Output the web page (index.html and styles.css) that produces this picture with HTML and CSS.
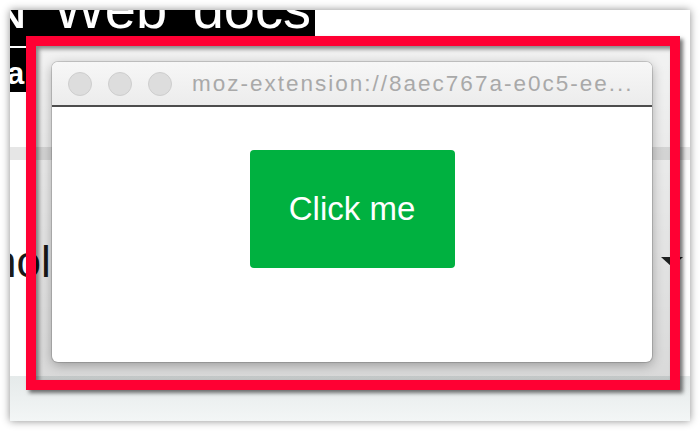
FILE: index.html
```html
<!DOCTYPE html>
<html>
<head>
<meta charset="utf-8">
<link rel="stylesheet" href="styles.css">
</head>
<body>
<div class="shot">
  <div class="hdr"><span class="logo">N Web docs</span></div>
  <div class="nav"><span class="nav-letter">a</span></div>
  <div class="band"></div>
  <div class="row">
    <span class="row-text">nol</span>
    <span class="caret"></span>
  </div>
  <div class="foot"></div>

  <div class="highlight">
    <div class="popup">
      <div class="titlebar">
        <span class="light"></span>
        <span class="light"></span>
        <span class="light"></span>
        <span class="title">moz-extension://8aec767a-e0c5-ee...</span>
      </div>
      <div class="content">
        <button class="btn">Click me</button>
      </div>
    </div>
  </div>
</div>
</body>
</html>
```

FILE: styles.css
```css
html, body {
  margin: 0;
  padding: 0;
  background: #ffffff;
}
body {
  width: 700px;
  height: 432px;
  font-family: "Liberation Sans", Arial, sans-serif;
  padding: 10px;
  box-sizing: border-box;
}
.shot {
  position: relative;
  width: 680px;
  height: 411px;
  background: #ffffff;
  box-shadow: 0 0 8px rgba(0,0,0,0.45);
  overflow: hidden;
  display: flex;
  flex-direction: column;
}
.hdr {
  width: 305px;
  height: 36px;
  flex: none;
  background: #000;
  overflow: hidden;
}
.logo {
  display: block;
  color: #fff;
  font-size: 56px;
  line-height: 56px;
  word-spacing: 10px;
  margin-top: -29px;
  margin-left: -23px;
  white-space: nowrap;
}
.nav {
  width: 16px;
  height: 44px;
  flex: none;
  margin-top: 2px;
  background: #000;
  overflow: hidden;
}
.nav-letter {
  display: block;
  color: #fff;
  font-weight: bold;
  font-size: 31px;
  line-height: 31px;
  margin-top: 10px;
  margin-left: -3px;
}
.band {
  flex: none;
  height: 13px;
  margin-top: 55px;
  background: #e6e6e6;
}
.row {
  flex: none;
  display: flex;
  justify-content: space-between;
  align-items: flex-start;
  margin-top: 80px;
  height: 44px;
}
.row-text {
  font-size: 44px;
  line-height: 44px;
  color: #1a1a1a;
  margin-left: -18px;
}
.caret {
  width: 0;
  height: 0;
  margin-top: 17px;
  margin-right: 7px;
  border-left: 11.5px solid transparent;
  border-right: 11.5px solid transparent;
  border-top: 10px solid #222;
}
.foot {
  flex: none;
  margin-top: auto;
  height: 45px;
  background: linear-gradient(#e5eaea, #f3f6f6);
}
.highlight {
  position: absolute;
  left: 16px;
  top: 26px;
  width: 654px;
  height: 354px;
  box-sizing: border-box;
  border: 10px solid #ff0033;
  padding: 16px 18px 18px 16px;
  background: linear-gradient(rgba(0,0,0,0.05), rgba(0,0,0,0.15));
  box-shadow: 3px 3px 4px rgba(0,0,0,0.55), inset 3px 3px 4px rgba(0,0,0,0.45);
}
.popup {
  width: 600px;
  height: 300px;
  display: flex;
  flex-direction: column;
  background: #fff;
  border-radius: 6px;
  overflow: hidden;
  box-shadow: 0 0 0 1px rgba(0,0,0,0.14), 0 3px 12px rgba(0,0,0,0.3);
}
.titlebar {
  flex: none;
  height: 43px;
  border-bottom: 2px solid #4d4d4d;
  background: linear-gradient(#f7f7f7, #ececec);
  display: flex;
  align-items: center;
  gap: 16px;
  padding-left: 16px;
}
.light {
  flex: none;
  width: 22px;
  height: 22px;
  border-radius: 50%;
  background: #dddddd;
  border: 1px solid #cecece;
}
.title {
  margin-left: 4px;
  color: #a9a9a9;
  font-size: 22.5px;
  letter-spacing: 2px;
  white-space: nowrap;
}
.content {
  flex: 1;
  display: flex;
  justify-content: center;
  align-items: flex-start;
  padding-top: 43px;
}
.btn {
  width: 205px;
  height: 118px;
  border: none;
  border-radius: 4px;
  background: #00b140;
  color: #fff;
  font-family: "Liberation Sans", Arial, sans-serif;
  font-size: 33px;
  padding: 0;
  display: flex;
  align-items: center;
  justify-content: center;
}
```
